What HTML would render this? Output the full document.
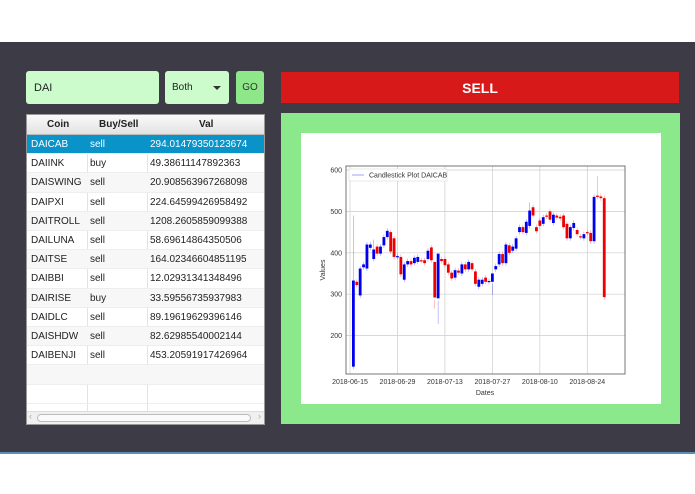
<!DOCTYPE html>
<html><head><meta charset="utf-8"><style>
*{margin:0;padding:0;box-sizing:border-box}
body{width:695px;height:494px;background:#fff;font-family:"Liberation Sans",sans-serif;position:relative;overflow:hidden}
#dark{position:absolute;left:0;top:42px;width:695px;height:410px;background:#3d3b46}
#line{position:absolute;left:0;top:452px;width:695px;height:2px;background:#5a8fb8}
.box{position:absolute;border-radius:3px}
#tf{left:26px;top:71px;width:133px;height:33px;background:#ccfccb;font-size:11px;padding:11px 8px;color:#222}
#cb{left:165px;top:71px;width:64px;height:33px;background:#ccfccb;font-size:10px;padding:11px 7px;color:#222}
#cb:after{content:"";position:absolute;right:8px;top:15px;border:4px solid transparent;border-top:4px solid #333;border-bottom:0}
#go{left:236px;top:71px;width:28px;height:33px;background:#8ee88a;font-size:10px;text-align:center;padding-top:11px;color:#333}
#sell{left:281px;top:72px;width:398px;height:31px;background:#d7191a;color:#fff;font-weight:bold;font-size:14px;text-align:center;padding-top:8px;border-radius:0}
#gp{position:absolute;left:281px;top:113px;width:399px;height:311px;background:#8ce98b}
#wp{position:absolute;left:301px;top:133px;width:360px;height:271px;background:#fff}
#tbl{position:absolute;left:26px;top:114px;width:239px;height:311px;background:#fff;border:1px solid #999;font-size:10px;color:#222}
.r{position:absolute;left:0;width:237px;height:19.2px;border-bottom:1px solid #eee}
.r span{position:absolute;top:4px}
.c1{left:4px}.c2{left:63px}.c3{left:123px}
.vl{position:absolute;top:0;width:1px;height:296px;background:#e3e3e3}
#hd{position:absolute;left:0;top:0;width:237px;height:20px;background:linear-gradient(#fafafa,#e2e2e2);border-bottom:1px solid #bbb;font-weight:bold;font-size:10px}
#hd span{position:absolute;top:4px}
#sb{position:absolute;left:0;top:296px;width:237px;height:13px;background:#f0f0f0;border-top:1px solid #ddd}
#sb div{position:absolute;left:10px;top:2px;width:214px;height:8px;border:1px solid #bbb;border-radius:4px;background:#fafafa}
</style></head><body>
<div id="dark"></div><div id="line"></div>
<div class="box" id="tf">DAI</div>
<div class="box" id="cb">Both</div>
<div class="box" id="go">GO</div>
<div class="box" id="sell">SELL</div>
<div id="gp"></div><div id="wp"></div>
<div id="tbl">
<div class="vl" style="left:60px"></div><div class="vl" style="left:120px"></div>
<div id="hd"><span style="left:20px">Coin</span><span style="left:72px">Buy/Sell</span><span style="left:172px">Val</span></div>
<div class="r" style="top:20px;background:#0a93c9;color:#fff"><span class="c1">DAICAB</span><span class="c2">sell</span><span class="c3">294.01479350123674</span></div>
<div class="r" style="top:39.2px"><span class="c1">DAIINK</span><span class="c2">buy</span><span class="c3">49.38611147892363</span></div>
<div class="r" style="top:58.4px;background:#f7f7f7"><span class="c1">DAISWING</span><span class="c2">sell</span><span class="c3">20.908563967268098</span></div>
<div class="r" style="top:77.6px"><span class="c1">DAIPXI</span><span class="c2">sell</span><span class="c3">224.64599426958492</span></div>
<div class="r" style="top:96.8px;background:#f7f7f7"><span class="c1">DAITROLL</span><span class="c2">sell</span><span class="c3">1208.2605859099388</span></div>
<div class="r" style="top:116px"><span class="c1">DAILUNA</span><span class="c2">sell</span><span class="c3">58.69614864350506</span></div>
<div class="r" style="top:135.2px;background:#f7f7f7"><span class="c1">DAITSE</span><span class="c2">sell</span><span class="c3">164.02346604851195</span></div>
<div class="r" style="top:154.4px"><span class="c1">DAIBBI</span><span class="c2">sell</span><span class="c3">12.02931341348496</span></div>
<div class="r" style="top:173.6px;background:#f7f7f7"><span class="c1">DAIRISE</span><span class="c2">buy</span><span class="c3">33.59556735937983</span></div>
<div class="r" style="top:192.8px"><span class="c1">DAIDLC</span><span class="c2">sell</span><span class="c3">89.19619629396146</span></div>
<div class="r" style="top:212px;background:#f7f7f7"><span class="c1">DAISHDW</span><span class="c2">sell</span><span class="c3">82.62985540002144</span></div>
<div class="r" style="top:231.2px"><span class="c1">DAIBENJI</span><span class="c2">sell</span><span class="c3">453.20591917426964</span></div>
<div class="r" style="top:250.4px;background:#f7f7f7"></div>
<div class="r" style="top:269.6px"></div>
<div id="sb"><div></div><span style="position:absolute;left:2px;top:-1px;font-size:9px;color:#aaa">‹</span><span style="position:absolute;right:3px;top:-1px;font-size:9px;color:#aaa">›</span></div>
</div>
<svg id="ch" style="position:absolute;left:0;top:0" width="695" height="494" font-family="Liberation Sans,sans-serif" font-size="7" fill="#333"></svg>
<script>
var s=document.getElementById('ch'),h='';
function Y(v){return 170+(600-v)*0.414}function X(d){return 350+3.39*d}
[600,500,400,300,200].forEach(function(v){h+='<line x1="346" x2="625" y1="'+Y(v)+'" y2="'+Y(v)+'" stroke="#ccc" stroke-width="0.7"/><text x="342" y="'+(Y(v)+2.5)+'" text-anchor="end">'+v+'</text>';});
['2018-06-15','2018-06-29','2018-07-13','2018-07-27','2018-08-10','2018-08-24'].forEach(function(t,i){var x=X(i*14);h+='<line x1="'+x+'" x2="'+x+'" y1="166" y2="374" stroke="#ccc" stroke-width="0.7"/><text x="'+x+'" y="384" text-anchor="middle">'+t+'</text>';});
h+='<rect x="346" y="166" width="279" height="208" fill="none" stroke="#555" stroke-width="0.8"/>';
var D=[[125,333,490],[330,322],[297,362],[365,372],[362,420],[412,420],[385,408,432],[415,398],[398,415],[418,438],[438,453],[450,403],[435,390],[390,392],[390,348],[335,372],[372,380],[380,372],[375,388],[378,390],[382,380],[382,375],[385,405],[413,382],[378,292,265],[290,398,228],[385,380],[385,370],[372,352],[352,338],[340,358],[357,352],[350,372],[372,360],[360,378],[375,360],[355,325],[318,335],[325,335],[340,330],[330,332],[330,350,298],[360,368],[372,397],[397,375],[375,420],[418,400],[405,415],[410,435],[450,462],[462,450],[448,475],[465,502,522],[510,490],[462,452],[478,465],[470,486],[490,488],[500,480],[472,492],[490,485],[487,483],[490,462],[470,435],[435,462],[460,472],[455,445],[440,438],[435,445],[450,448],[448,428],[428,535],[538,535,585],[536,532],[532,293]];
D.forEach(function(c,i){var d=i+1,x=X(d),o=c[0],cl=c[1],col=cl>=o?'#0000ee':'#ee0000';var hi=c[2]||Math.max(o,cl)+6,lo=Math.min(o,cl)-6;
h+='<line x1="'+x+'" x2="'+x+'" y1="'+Y(hi)+'" y2="'+Y(lo)+'" stroke="'+col+'" stroke-width="0.4" opacity="0.6"/>';
var t=Y(Math.max(o,cl)),b=Y(Math.min(o,cl));h+='<rect x="'+(x-1.4)+'" y="'+t+'" width="2.8" height="'+Math.max(1.2,b-t)+'" fill="'+col+'"/>';});
h+='<rect x="349" y="169" width="98" height="12" fill="#fff" stroke="#ddd" stroke-width="0.6"/><line x1="352" x2="364" y1="175" y2="175" stroke="#77f" stroke-width="0.7"/><text x="369" y="177.5">Candlestick Plot DAICAB</text>';
h+='<text x="485" y="395" text-anchor="middle">Dates</text><text transform="translate(325,270) rotate(-90)" text-anchor="middle">Values</text>';
s.innerHTML=h;
</script>
</body></html>
